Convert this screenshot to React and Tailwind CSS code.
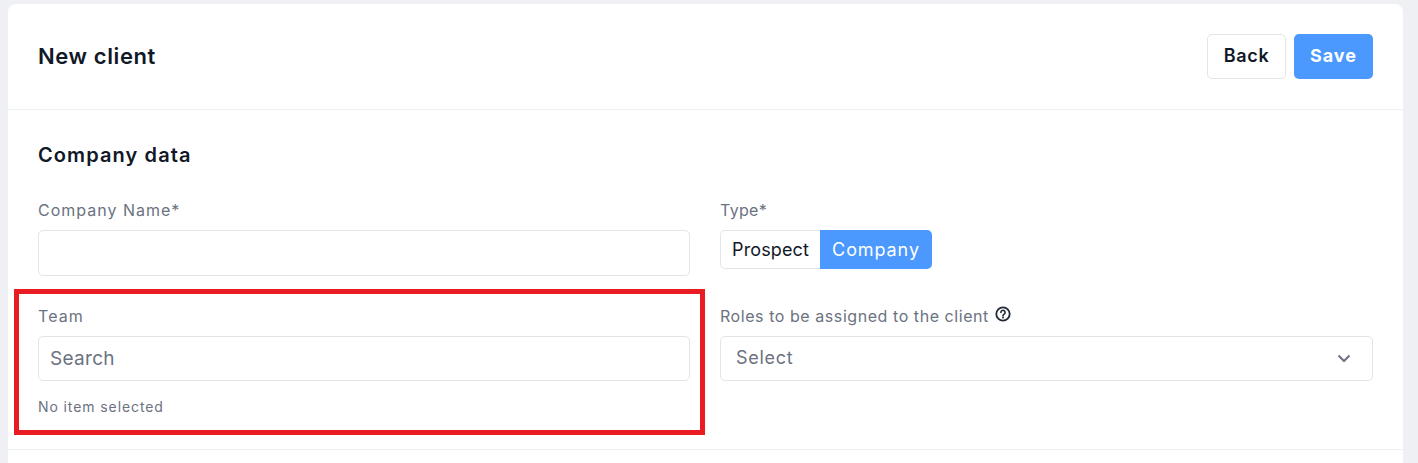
import React from "react";

function Label({ children, className }) {
  return <div className={"h-[22px] text-[16px] leading-[20px] text-[#6b7280] " + className}>{children}</div>;
}

export default function App() {
  return (
    <div className="relative h-[463px] w-[1418px] overflow-hidden bg-[#eef0f3] pt-1 pl-2 pr-[15px] font-['Inter','Liberation_Sans',sans-serif]">
      <div className="h-[459px] rounded-t-lg bg-white">
        <header className="flex h-[106px] items-center justify-between border-b border-[#eef0f3] px-[30px]">
          <h1 className="pb-[2px] text-[22px] font-semibold leading-none tracking-[0.6px] text-[#111827]">New client</h1>
          <div className="flex gap-2">
            <button className="h-[45px] w-[79px] rounded-[5px] border border-[#e2e4ea] bg-white pb-[2px] text-[18px] font-semibold tracking-[0.7px] text-[#111827]">Back</button>
            <button className="h-[45px] w-[79px] rounded-[5px] bg-[#4b98fe] pb-[2px] text-[18px] font-bold tracking-[1px] text-white">Save</button>
          </div>
        </header>
        <section className="h-[340px] border-b border-[#eef0f3] px-[30px] pt-[33px]">
          <h2 className="h-[26px] text-[20px] font-semibold leading-[24px] tracking-[1.1px] text-[#111827]">Company data</h2>
          <div className="mt-[31px] grid grid-cols-[652px_653px] gap-x-[30px]">
            <div>
              <Label className="tracking-[1px]">Company Name*</Label>
              <input className="mt-[8px] block h-[46px] w-full rounded-[5px] border border-[#e2e4ea] bg-white" />
            </div>
            <div>
              <Label className="tracking-[0.3px]">Type*</Label>
              <div className="mt-[8px] flex h-[39px] w-[212px] text-[18px]">
                <div className="flex w-[100px] items-center justify-center rounded-l-[5px] border border-r-0 border-[#e2e4ea] tracking-[0.1px] text-[#111827]">Prospect</div>
                <div className="flex w-[112px] items-center justify-center rounded-r-[5px] bg-[#4b98fe] tracking-[0.9px] text-white">Company</div>
              </div>
            </div>
            <div className="mt-[30px]">
              <Label className="tracking-[1.1px]">Team</Label>
              <input placeholder="Search" className="mt-[8px] block h-[45px] w-full rounded-[5px] border border-[#e2e4ea] bg-white px-[11px] text-[19px] tracking-[0.3px] placeholder:text-[#6b7280]" />
              <div className="mt-[16px] text-[14px] leading-5 tracking-[0.9px] text-[#6b7280]">No item selected</div>
            </div>
            <div className="mt-[30px]">
              <div className="flex h-[22px] items-start gap-[6px]">
                <span className="text-[16px] leading-[20px] tracking-[0.56px] text-[#6b7280]">Roles to be assigned to the client</span>
                <svg width="16" height="16" viewBox="0 0 16 16" fill="none">
                  <circle cx="8" cy="8" r="6.7" stroke="#1f2937" strokeWidth="1.8" />
                  <path d="M5.9 6.4a2.1 2.1 0 1 1 3.3 1.7c-.8.5-1.2.8-1.2 1.6" stroke="#1f2937" strokeWidth="1.6" strokeLinecap="round" />
                  <circle cx="8" cy="11.6" r="1" fill="#1f2937" />
                </svg>
              </div>
              <div className="mt-[8px] flex h-[45px] items-center justify-between rounded-[5px] border border-[#e2e4ea] bg-white pl-[15px] pr-[21px]">
                <span className="pb-[2px] text-[18px] tracking-[0.7px] text-[#6b7280]">Select</span>
                <svg width="14" height="9" viewBox="0 0 14 9" fill="none">
                  <path d="M1.5 1.5 7 7l5.5-5.5" stroke="#6b7280" strokeWidth="2" />
                </svg>
              </div>
            </div>
          </div>
        </section>
      </div>
      <div className="pointer-events-none absolute left-[14px] top-[289px] h-[146px] w-[691px] border-[5px] border-[#e91c24]" />
    </div>
  );
}
